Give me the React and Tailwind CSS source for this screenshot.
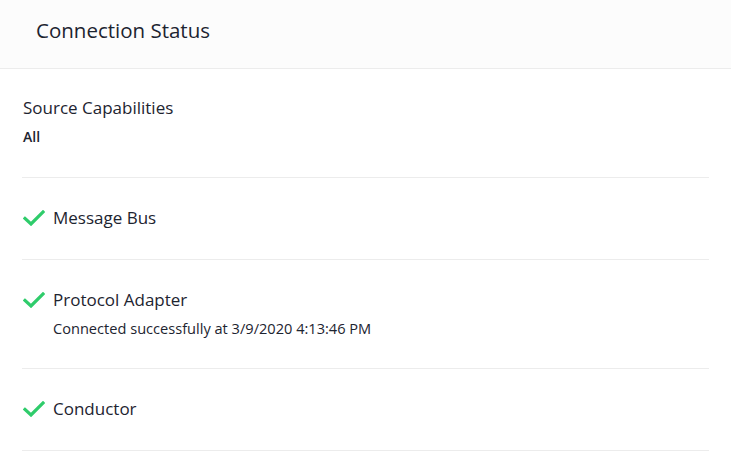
import React from "react";

const CheckIcon = () => (
  <svg width="22" height="16" viewBox="0 0 22 16" className="shrink-0">
    <path
      d="M2 8.5 L8 14 L20 2"
      fill="none"
      stroke="#2fcc6b"
      strokeWidth="3.2"
      strokeLinecap="square"
    />
  </svg>
);

const StatusRow = ({ title, detail }) => (
  <div className={`border-b border-[#ececec] pt-[28px] ${detail ? "pb-[30px]" : "pb-[29px]"}`}>
    <div className="flex items-center">
      <div className="w-[31px] pl-[1px]">
        <CheckIcon />
      </div>
      <span className="text-[17px] leading-[24px]">{title}</span>
    </div>
    {detail && (
      <div className="mt-[6px] pl-[31px] text-[14.6px] leading-[20px]">{detail}</div>
    )}
  </div>
);

const App = () => {
  const rows = [
    { title: "Message Bus" },
    {
      title: "Protocol Adapter",
      detail: "Connected successfully at 3/9/2020 4:13:46 PM",
    },
    { title: "Conductor" },
  ];

  return (
    <div
      className="w-[731px] h-[461px] overflow-hidden bg-white text-[#1d2430]"
      style={{ fontFamily: '"Open Sans", "Noto Sans", sans-serif' }}
    >
      <div className="h-[69px] bg-[#fcfcfc] border-b border-[#ececec] pl-[36px] pt-[16px]">
        <h1 className="text-[20.5px] leading-[28px]">Connection Status</h1>
      </div>
      <div className="pl-[22px] pr-[22px]">
        <div className="border-b border-[#ececec] pt-[27px] pb-[30px] pl-[1px]">
          <div className="text-[17px] leading-[24px]">Source Capabilities</div>
          <div className="mt-[7px] text-[14px] leading-[20px] font-semibold">All</div>
        </div>
        {rows.map((r) => (
          <StatusRow key={r.title} title={r.title} detail={r.detail} />
        ))}
      </div>
    </div>
  );
};

export default App;
